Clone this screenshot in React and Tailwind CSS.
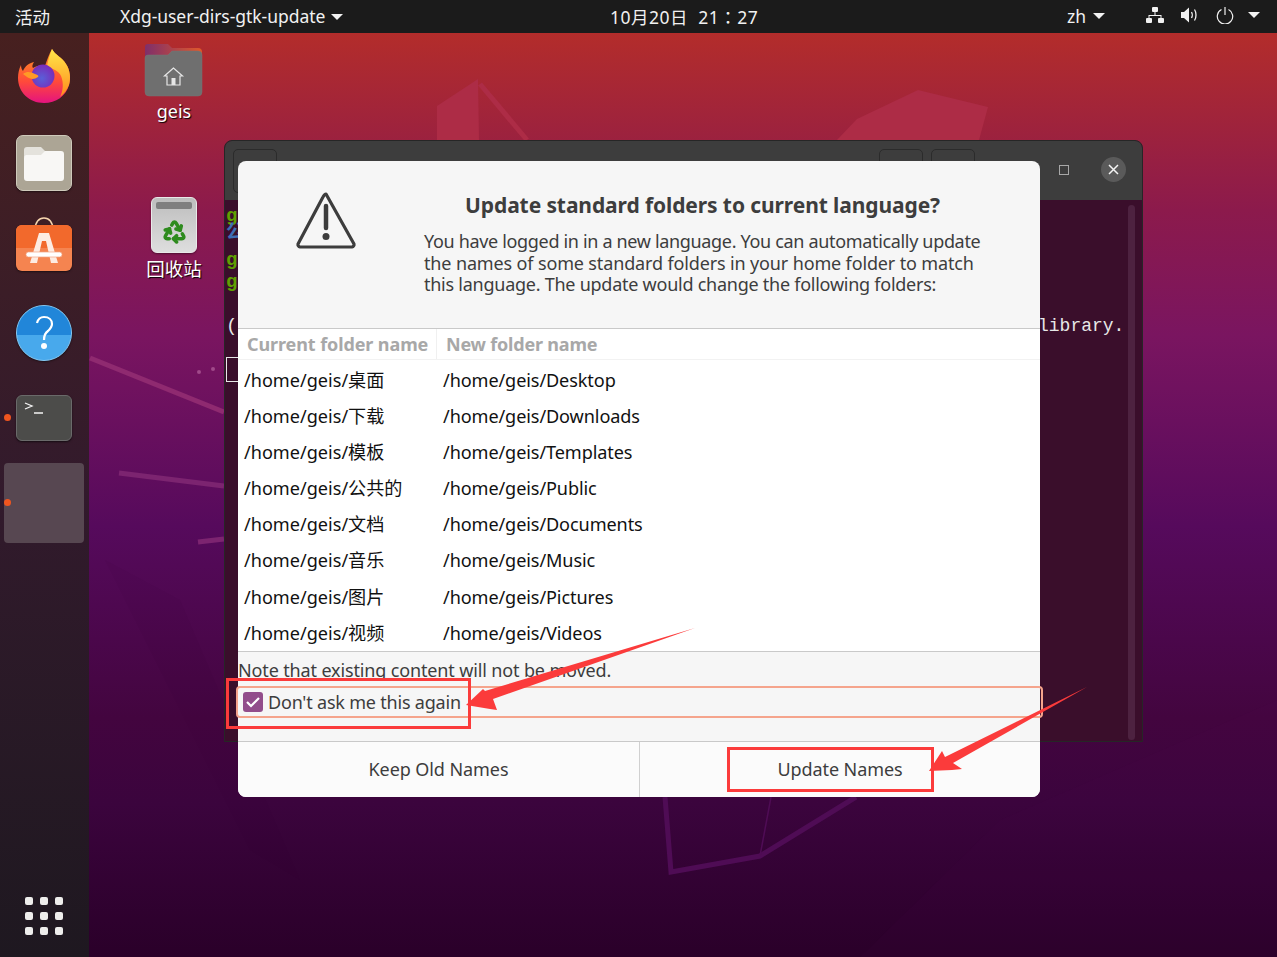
import { Recycle } from "lucide-react";

const SANS = "font-['Noto_Sans','Noto_Sans_CJK_SC',sans-serif]";

const FOLDERS = [
  ["/home/geis/桌面", "/home/geis/Desktop"],
  ["/home/geis/下载", "/home/geis/Downloads"],
  ["/home/geis/模板", "/home/geis/Templates"],
  ["/home/geis/公共的", "/home/geis/Public"],
  ["/home/geis/文档", "/home/geis/Documents"],
  ["/home/geis/音乐", "/home/geis/Music"],
  ["/home/geis/图片", "/home/geis/Pictures"],
  ["/home/geis/视频", "/home/geis/Videos"],
];

function Caret({ className }) {
  return <span className={`inline-block h-0 w-0 border-x-[6px] border-t-[6px] border-x-transparent border-t-[#f2f2f2] ${className || ""}`} />;
}

function TopBar() {
  return (
    <header className="relative z-20 flex h-[33px] items-center bg-[#1b1b1b] text-[17.5px] text-[#f1f1f1]">
      <span className="ml-[15px] mt-[1px] w-[105px]">活动</span>
      <span className="flex items-center gap-[6px] tracking-[-0.04px]">
        Xdg-user-dirs-gtk-update
        <Caret />
      </span>
      <span className="absolute left-[610px] top-[4px] tracking-[0.5px]">
        10月20日&nbsp; 21<span className="font-['Noto_Sans_CJK_TC',sans-serif]">：</span>27
      </span>
      <span className="absolute left-[1067px] top-[3px] flex items-center gap-[7px]">
        zh
        <Caret />
      </span>
      <div className="absolute left-[1145px] top-[6px] flex items-center">
        <svg width="20" height="18" viewBox="0 0 20 18" fill="#f1f1f1">
          <rect x="7" y="1" width="6" height="5" rx="1" />
          <rect x="1" y="12" width="6" height="5" rx="1" />
          <rect x="13" y="12" width="6" height="5" rx="1" />
          <path d="M9.500 6h1v3h6v3h-1v-2h-11v2h-1v-3h6z" />
        </svg>
        <svg className="ml-[15px]" width="20" height="18" viewBox="0 0 20 18" fill="#f1f1f1">
          <path d="M1 6h3l5-4.500v15l-5-4.500h-3z" />
          <path d="M11.500 6c1 1.500 1 4.500 0 6M14.500 3.500c2 3 2 8 0 11" fill="none" stroke="#f1f1f1" strokeWidth="1.300" />
        </svg>
        <svg className="ml-[16px]" width="18" height="18" viewBox="0 0 18 18" fill="none" stroke="#f1f1f1" strokeWidth="1.200">
          <path d="M5.500 3.500a7.700 7.700 0 1 0 7 0" />
          <path d="M9 1v8" />
        </svg>
        <Caret className="ml-[14px]" />
      </div>
    </header>
  );
}

function Firefox() {
  return (
    <svg width="54" height="56" viewBox="0 0 54 56">
      <defs>
        <linearGradient id="ffBody" x1="0" y1="0" x2="0" y2="1">
          <stop offset="0" stopColor="#ff9a1e" />
          <stop offset="0.6" stopColor="#ff4a3a" />
          <stop offset="1" stopColor="#e5137f" />
        </linearGradient>
        <linearGradient id="ffFlame" x1="0" y1="0" x2="0" y2="1">
          <stop offset="0" stopColor="#ffe84a" />
          <stop offset="1" stopColor="#ff8a1c" />
        </linearGradient>
        <radialGradient id="ffGlobe" cx="0.45" cy="0.6" r="0.6">
          <stop offset="0" stopColor="#5a5fd8" />
          <stop offset="1" stopColor="#7a2bb8" />
        </radialGradient>
      </defs>
      <path d="M35 1c3 6 10 8 14 15 4 6 5 14 3 21-3 11-13 18-25 18C12 55 1 44 1 30c0-5 1-9 3-13 0 3 1 5 2 6 2-5 6-8 11-9-2 3-2 5-1 6 3-2 8-3 12-2 2-6 4-12 7-17z" fill="url(#ffBody)" />
      <path d="M35 1c3 6 10 8 14 15 4 6 5 14 3 21-2 5-5 9-9 12 3-6 4-14 1-21-2-5-8-7-14-10 1-6 3-12 5-17z" fill="url(#ffFlame)" />
      <circle cx="26" cy="28" r="11.500" fill="url(#ffGlobe)" />
      <path d="M6 26c4-3 8-2 12 0 3 1 4 2 3 3-4 3-8 2-11 0z" fill="#ff9a26" />
    </svg>
  );
}

function Files() {
  return (
    <div className="flex h-[56px] w-[56px] items-center justify-center rounded-[7px] border border-[#cfcabb] bg-[#aca595] shadow-[0_1px_2px_rgba(0,0,0,0.5)]">
      <svg width="40" height="36" viewBox="0 0 40 36">
        <path d="M3 2h14l4 4v6H0V5a3 3 0 0 1 3-3z" fill="#e4e2dc" />
        <path d="M0 13a3 3 0 0 1 2-3h15l4-4h16a3 3 0 0 1 3 3v24a3 3 0 0 1-3 3H3a3 3 0 0 1-3-3z" fill="#f8f7f5" />
      </svg>
    </div>
  );
}

function Software() {
  return (
    <div className="relative mt-[-8px] h-[54px] w-[56px]">
      <svg className="absolute left-[17px] top-0" width="22" height="14" viewBox="0 0 22 14" fill="none" stroke="#f6d5ae" strokeWidth="1.500">
        <path d="M2 13C2 5 6 1 11 1s9 4 9 12" />
      </svg>
      <div className="absolute left-0 top-[8px] h-[46px] w-[56px] overflow-hidden rounded-[6px] bg-[#f58450] shadow-[0_1px_2px_rgba(0,0,0,0.5)]">
        <div className="h-[23px] bg-[#f2692c]" />
      </div>
      <svg className="absolute left-[9px] top-[14px]" width="38" height="36" viewBox="0 0 38 36">
        <path d="M14 2h10l9 30h-7l-5-22h-4l-5 22H5z" fill="#fdece2" />
        <rect x="1" y="21" width="36" height="5" rx="2.500" fill="#ffffff" stroke="#f2a583" strokeWidth="0.700" />
      </svg>
    </div>
  );
}

function Help() {
  return (
    <div className="relative flex h-[56px] w-[56px] items-center justify-center overflow-hidden rounded-full border border-[#86c8f2] bg-[#48a9ec] shadow-[0_1px_2px_rgba(0,0,0,0.5)]">
      <div className="absolute inset-x-0 top-0 h-[29px] bg-[#2186d9]" />
      <svg className="relative" width="20" height="36" viewBox="0 0 20 36" fill="none">
        <path d="M3 8c1-4 4-6 7-6 5 0 8 3 8 7 0 3-2 5-4 7-3 2-4 4-4 9" stroke="#fff" strokeWidth="2.200" />
        <circle cx="10" cy="31" r="3" fill="#fff" />
      </svg>
    </div>
  );
}

function Terminal() {
  return (
    <div className="relative h-[46px] w-[56px] rounded-[6px] border border-[#6a6a6a] bg-[#4c4c4a] shadow-[0_1px_2px_rgba(0,0,0,0.6)]">
      <svg className="absolute left-[7px] top-[5px]" width="20" height="16" viewBox="0 0 20 16" fill="none" stroke="#f4f4f4" strokeWidth="1.300">
        <path d="M1 2l7 3-7 3M10 12h9" />
      </svg>
    </div>
  );
}

function Dock() {
  return (
    <aside className="relative z-10 flex h-[924px] w-[89px] shrink-0 flex-col items-center bg-gradient-to-b from-[#47201f] via-[#321a2c] to-[#1e1820] pr-[1px]">
      <div className="mt-[15px]"><Firefox /></div>
      <div className="mt-[31px]"><Files /></div>
      <div className="mt-[34px]"><Software /></div>
      <div className="mt-[34px]"><Help /></div>
      <div className="relative mt-[34px]">
        <Terminal />
        <span className="absolute left-[-12px] top-[19px] h-[7px] w-[7px] rounded-full bg-[#f0551f]" />
      </div>
      <div className="relative mt-[22px] h-[80px] w-[80px] rounded-[4px] bg-[#574751]">
        <span className="absolute left-0 top-[36px] h-[7px] w-[7px] rounded-full bg-[#f0551f]" />
      </div>
      <div className="mt-auto mb-[22px] grid grid-cols-3 gap-[7px]">
        {Array.from({ length: 9 }).map((_, i) => (
          <span key={i} className="h-[8px] w-[8px] rounded-[2px] bg-[#eeeeec]" />
        ))}
      </div>
    </aside>
  );
}

function Wallpaper() {
  return (
    <svg className="absolute left-0 top-0" width="1277" height="957" viewBox="0 0 1277 957" fill="none">
      <path d="M90 358L224 412" stroke="#8f2a70" strokeWidth="5" />
      <path d="M119 473L224 486" stroke="#7c2470" strokeWidth="5" />
      <path d="M198 542L224 539" stroke="#7c2470" strokeWidth="5" />
      <circle cx="199" cy="372" r="2" fill="#a04a8a" />
      <circle cx="213" cy="369" r="2" fill="#a04a8a" />
      <path d="M437 140V106L478 79L479 140z" fill="#ad2c46" />
      <path d="M480 84L527 140" stroke="#ad2c46" strokeWidth="5" />
      <path d="M837 140L857 119L918 90L988 107L979 140z" fill="#ad2c46" />
      <path d="M665 797L671 872L760 856L856 797" stroke="#4f0c55" strokeWidth="5" />
      <path d="M760 856L771 797" stroke="#4f0c55" strokeWidth="1.500" />
      <path d="M105 560L250 850L300 880L180 600z" fill="#300332" fillOpacity="0.06" />
      <path d="M860 957L1000 820L1277 700V957z" fill="#4f0c55" fillOpacity="0.06" />
    </svg>
  );
}

function DesktopIcons() {
  return (
    <>
      <div className="absolute left-[134px] top-[44px] flex w-[80px] flex-col items-center">
        <svg width="60" height="54" viewBox="0 0 60 54">
          <defs>
            <linearGradient id="homeBack" x1="0" y1="0" x2="1" y2="0">
              <stop offset="0" stopColor="#7f2f6a" />
              <stop offset="1" stopColor="#e0582a" />
            </linearGradient>
          </defs>
          <path d="M4 0h20l4 4h26a4 4 0 0 1 4 4v20H1V3a3 3 0 0 1 3-3z" fill="url(#homeBack)" />
          <path d="M1 14a3 3 0 0 1 3-3h20l4-4h26a4 4 0 0 1 4 4v37a4 4 0 0 1-4 4H5a4 4 0 0 1-4-4z" fill="#6f6f6f" stroke="#777" strokeWidth="0.500" />
          <path d="M29.500 24l-9 8h2.500v9h13v-9h2.500z" fill="none" stroke="#e6e6e6" strokeWidth="1.200" />
          <rect x="27.500" y="34" width="4" height="7" fill="#e6e6e6" />
        </svg>
        <span className="mt-[1px] text-[18px] leading-[24px] text-white [text-shadow:1px_1px_1px_#000]">geis</span>
      </div>
      <div className="absolute left-[134px] top-[197px] flex w-[80px] flex-col items-center">
        <div className="relative flex h-[56px] w-[46px] items-center justify-center rounded-[6px] border border-[#e9e9e9] bg-gradient-to-b from-[#bdbdbd] to-[#dedede] shadow-[0_1px_2px_rgba(0,0,0,0.4)]">
          <span className="absolute left-[4px] top-[4px] h-[7px] w-[36px] rounded-[2px] bg-[#7f7f7f]" />
          <Recycle className="mt-[12px] text-[#2e8b1e]" size={25} strokeWidth={3.400} />
        </div>
        <span className="mt-[4px] text-[18.500px] leading-[24px] text-white [text-shadow:1px_1px_1px_#000]">回收站</span>
      </div>
    </>
  );
}

function TerminalWindow() {
  return (
    <div className="absolute left-[224px] top-[140px] flex h-[602px] w-[919px] flex-col overflow-hidden rounded-t-[8px] border border-[#262626] bg-[#3a0e2b]">
      <div className="relative h-[59px] bg-[#3d3d3d]">
        <span className="absolute left-[8px] top-[8px] h-[44px] w-[44px] rounded-[5px] border border-[#2b2b2b]" />
        <span className="absolute left-[654px] top-[8px] h-[44px] w-[44px] rounded-[5px] border border-[#2b2b2b]" />
        <span className="absolute left-[706px] top-[8px] h-[44px] w-[44px] rounded-[5px] border border-[#2b2b2b]" />
        <span className="absolute left-[834px] top-[24px] h-[10px] w-[10px] border-[1.500px] border-[#a8a8a8]" />
        <span className="absolute left-[876px] top-[16px] flex h-[25px] w-[25px] items-center justify-center rounded-full bg-[#5a5a5a]">
          <svg width="11" height="11" viewBox="0 0 11 11" stroke="#f4f4f4" strokeWidth="1.500"><path d="M1 1l9 9M10 1l-9 9" /></svg>
        </span>
      </div>
      <div className="relative flex-1 font-['Liberation_Mono','Noto_Sans_CJK_SC',monospace] text-[19px] font-bold leading-[16px]">
        <span className="absolute left-[1px] top-[8px] text-[#5fa000]">g</span>
        <span className="absolute left-[1px] top-[25px] text-[#3d6db5]">公</span>
        <span className="absolute left-[1px] top-[52px] text-[#5fa000]">g</span>
        <span className="absolute left-[1px] top-[74px] text-[#5fa000]">g</span>
        <span className="absolute left-[1px] top-[118px] font-normal text-[#e8e8e8]">(</span>
        <span className="absolute left-[813px] top-[118px] text-[18px] font-normal text-[#e8e8e8]">library.</span>
        <span className="absolute left-[1px] top-[157px] h-[25px] w-[13px] border border-[#e8e8e8]" />
        <span className="absolute right-[7px] top-[5px] h-[535px] w-[7px] rounded-full bg-[#4d2240]" />
      </div>
    </div>
  );
}

function WarningIcon() {
  return (
    <svg width="62" height="60" viewBox="0 0 62 60" fill="none">
      <path d="M31 3L59 53a2.500 2.500 0 0 1-2 3H5a2.500 2.500 0 0 1-2-3L28 6c1-2 2-3 3-3z" stroke="#3d3d3d" strokeWidth="3.200" strokeLinejoin="round" />
      <path d="M31 15v22" stroke="#3d3d3d" strokeWidth="4.500" strokeLinecap="round" />
      <circle cx="31" cy="45.500" r="3.500" fill="#3d3d3d" />
    </svg>
  );
}

function Dialog() {
  return (
    <div className={`absolute left-[238px] top-[161px] flex h-[636px] w-[802px] flex-col overflow-hidden rounded-[8px] bg-[#f6f6f6] text-[#3d3d3d] ${SANS}`}>
      <div className="flex h-[167px] shrink-0">
        <div className="ml-[57px] mt-[30px] shrink-0"><WarningIcon /></div>
        <div className="ml-[67px] w-[557px] pt-[29px]">
          <h1 className="whitespace-nowrap text-center text-[21px] font-bold leading-[30px] tracking-[-0.1px]">Update standard folders to current language?</h1>
          <p className="mt-[11px] whitespace-nowrap text-[18px] leading-[21.500px]">
            <span className="block tracking-[-0.33px]">You have logged in in a new language. You can automatically update</span>
            <span className="block tracking-[-0.14px]">the names of some standard folders in your home folder to match</span>
            <span className="block tracking-[-0.25px]">this language. The update would change the following folders:</span>
          </p>
        </div>
      </div>

      <div className="h-[324px] shrink-0 overflow-hidden border-y border-[#c9c9c9] bg-white">
        <div className="mb-[2px] flex h-[31px] items-center border-b border-[#f2f2f2] text-[18px] font-bold text-[#a8a8a8]">
          <span className="w-[198px] pl-[9px] tracking-[-0.1px]">Current folder name</span>
          <span className="h-full w-px bg-[#f0f0f0]" />
          <span className="pl-[9px] tracking-[-0.2px]">New folder name</span>
        </div>
        {FOLDERS.map(([oldName, newName]) => (
          <div key={oldName} className="flex h-[36.200px] items-center text-[18.100px] text-[#111]">
            <span className="w-[205px] pl-[6px]">{oldName}</span>
            <span className="tracking-[-0.1px]">{newName}</span>
          </div>
        ))}
      </div>

      <p className="mt-[6px] text-[18px] leading-[24px] tracking-[-0.14px]">Note that existing content will not be moved.</p>
      <div className="mt-[5px] flex h-[30px] items-center pl-[5px]">
        <span className="flex h-[20px] w-[20px] items-center justify-center rounded-[3px] bg-[#924d8b]">
          <svg width="14" height="12" viewBox="0 0 14 12" fill="none" stroke="#fff" strokeWidth="2.200"><path d="M1 6l4 4 8-8" /></svg>
        </span>
        <span className="ml-[5px] text-[18px] tracking-[-0.2px]">Don't ask me this again</span>
      </div>

      <div className="mt-auto flex h-[56px] border-t border-[#c9c9c9] bg-[#fbfbfb] text-[18px] tracking-[-0.08px]">
        <button type="button" className="w-[402px] border-r border-[#d0d0d0]">Keep Old Names</button>
        <button type="button" className="flex-1">Update Names</button>
      </div>
    </div>
  );
}

function Annotations() {
  return (
    <>
      <span className="absolute left-[236px] top-[686px] h-[32px] w-[807px] rounded-[4px] border-2 border-[#f5a48c]" />
      <span className="absolute left-[226px] top-[678px] h-[51px] w-[245px] border-[3px] border-[#fb3b3b]" />
      <span className="absolute left-[727px] top-[747px] h-[45px] w-[207px] border-[3px] border-[#fb3b3b]" />
      <svg className="absolute left-0 top-0" width="1277" height="957" viewBox="0 0 1277 957">
        <path d="M695 628L485 691L483 689L466 705L490 709L497 710L493 699z" fill="#fb3b3b" />
        <path d="M1087 687L945 757L942 751L929 771L952 770L962 769L953 763z" fill="#fb3b3b" />
      </svg>
    </>
  );
}

export default function App() {
  return (
    <div className={`relative h-[957px] w-[1277px] overflow-hidden bg-[linear-gradient(180deg,#b42d2a_3%,#8c1a4c_22%,#7a1560_35%,#560a5c_55%,#43053f_75%,#3b043d_84%,#2a0029_100%)] ${SANS}`}>
      <Wallpaper />
      <TopBar />
      <Dock />
      <DesktopIcons />
      <TerminalWindow />
      <Dialog />
      <Annotations />
    </div>
  );
}
